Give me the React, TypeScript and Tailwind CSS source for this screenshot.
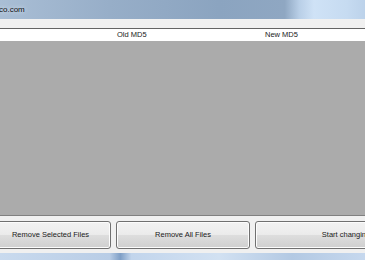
const font = "font-['Liberation_Sans',Arial,sans-serif]";

function Button({ label, className }: { label: string; className: string }) {
  return (
    <div
      className={`flex h-[28px] shrink-0 items-center justify-center rounded-[3px] border border-[#707070] bg-[linear-gradient(180deg,#f2f2f2_0%,#ebebeb_48%,#dddddd_52%,#cfcfcf_100%)] text-[7.5px] text-[#1a1a1a] shadow-[inset_0_0_0_1px_#fcfcfc] ${className}`}
    >
      {label}
    </div>
  );
}

export default function App() {
  return (
    <div className={`flex h-[260px] w-[365px] flex-col overflow-hidden bg-[#f0f0f0] ${font}`}>
      <div className="flex h-[19px] shrink-0 items-center bg-[linear-gradient(90deg,#a9bed5_0%,#97aec8_30%,#8ba4c0_60%,#8fa7c2_78%,#b9cfe7_82%,#cfe2f6_86%,#c6dbf1_95%,#bcd2ea_100%)]">
        <span className="-ml-[1px] text-[8px] text-[#111] [text-shadow:0_0_4px_#e8f0fa]">co.com</span>
      </div>
      <div className="h-[9px] shrink-0 bg-[#f0f0f0]" />
      <div className="flex h-[13px] shrink-0 items-center border-t border-[#646464] bg-white text-[7.5px] text-[#1a1a1a]">
        <span className="ml-[117px] w-[148px]">Old MD5</span>
        <span>New MD5</span>
      </div>
      <div className="h-[175px] shrink-0 border-b border-[#808080] bg-[#ababab]" />
      <div className="flex shrink-0 gap-[5px] pt-[5px] -ml-[10px]">
        <Button label="Remove Selected Files" className="w-[121px]" />
        <Button label="Remove All Files" className="w-[134px]" />
        <Button label="Start changing MD5" className="w-[200px]" />
      </div>
      <div className="h-[4px] shrink-0" />
      <div className="flex-1 bg-[linear-gradient(90deg,#c9daee_0%,#b9cde6_30%,#7f9fc6_33%,#c2d5ec_36%,#d2e1f2_60%,#b3c9e3_80%,#c6d8ee_100%)]" />
    </div>
  );
}
